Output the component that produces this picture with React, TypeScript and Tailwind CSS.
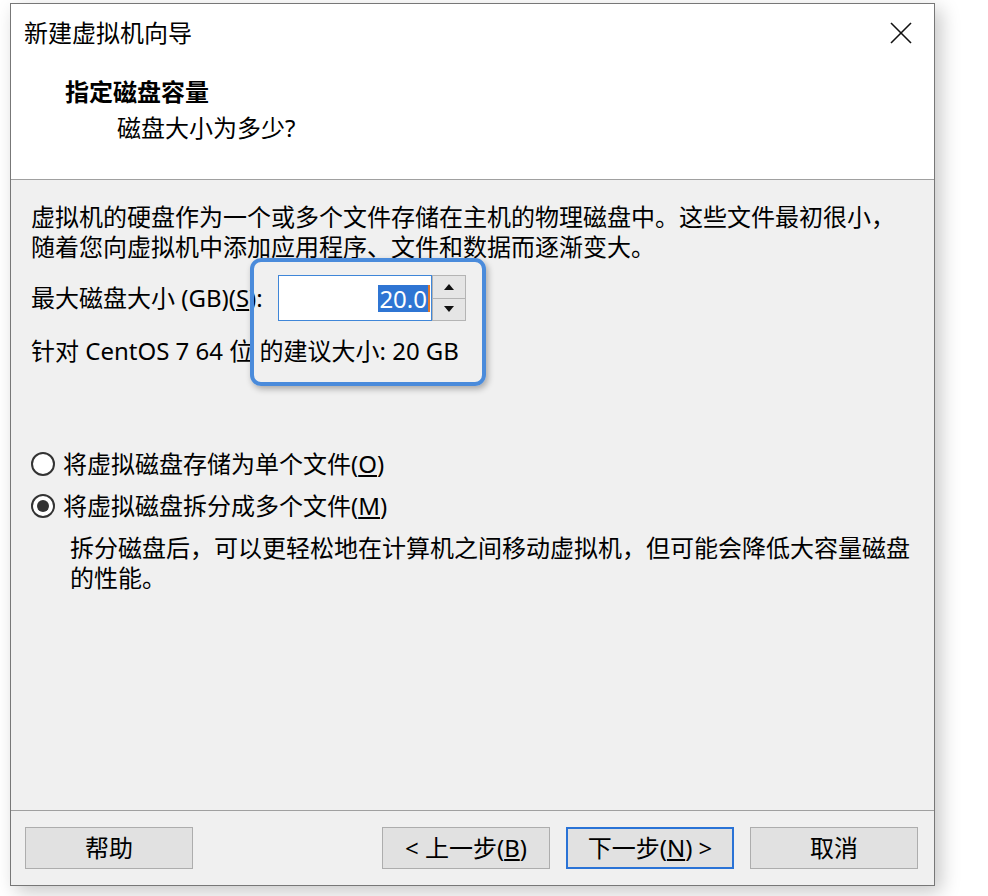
import { type ReactNode } from 'react';

const font = {
  fontFamily: '"Noto Sans", "Noto Sans CJK SC", sans-serif',
};

function Radio({ checked, children }: { checked?: boolean; children: ReactNode }) {
  return (
    <div className="flex items-center h-[30px]">
      <span className="w-[24px] h-[24px] rounded-full border-2 border-[#333333] bg-white flex items-center justify-center">
        {checked && <span className="w-[12px] h-[12px] rounded-full bg-[#333333]" />}
      </span>
      <span className="ml-[8px]">{children}</span>
    </div>
  );
}

function Button({ children, primary }: { children: ReactNode; primary?: boolean }) {
  return (
    <button
      className={
        primary
          ? 'w-[168px] h-[42px] bg-[#e1e1e1] border-2 border-[#2a73d6] flex items-center justify-center'
          : 'w-[168px] h-[42px] bg-[#e1e1e1] border border-[#adadad] flex items-center justify-center'
      }
    >
      {children}
    </button>
  );
}

export default function App() {
  return (
    <div className="min-h-screen bg-white text-[24px] text-black leading-[30px]" style={font}>
      <div className="pt-[3px] pl-[10px]">
        <div className="relative w-[925px] h-[883px] border border-[#777777] flex flex-col bg-[#f0f0f0] shadow-[6px_6px_18px_rgba(0,0,0,0.22)]">
          {/* Header */}
          <div className="h-[176px] bg-white border-b border-[#a0a0a0] shrink-0">
            <div className="flex items-center justify-between pl-[13px] pr-[21px] pt-[13px]">
              <span className="leading-[32px]">新建虚拟机向导</span>
              <svg width="24" height="24" viewBox="0 0 24 24" fill="none" stroke="#111" strokeWidth="1.6">
                <path d="M2 2 L22 22" />
                <path d="M22 2 L2 22" />
              </svg>
            </div>
            <div className="pl-[54px] mt-[27px] font-bold leading-[32px]">指定磁盘容量</div>
            <div className="pl-[106px] mt-[4px] leading-[32px]">磁盘大小为多少?</div>
          </div>

          {/* Body */}
          <div className="flex-1 pl-[20px] pr-[20px] pt-[22px]">
            <p>
              虚拟机的硬盘作为一个或多个文件存储在主机的物理磁盘中。这些文件最初很小，
              <br />
              随着您向虚拟机中添加应用程序、文件和数据而逐渐变大。
            </p>

            <div className="flex items-center mt-[13px] h-[46px]">
              <span className="w-[247px] shrink-0 whitespace-nowrap">
                最大磁盘大小 (GB)(<span className="underline">S</span>):
              </span>
              <div className="flex h-[46px]">
                <div className="w-[154px] h-[46px] bg-white border border-[#3f86d8] flex items-center justify-end pr-[1px]">
                  <span className="bg-[#2f75d3] text-white leading-[27px] px-[1px]">20.0</span>
                  <span className="w-[2px] h-[27px] bg-[#e0772b]" />
                </div>
                <div className="w-[34px] h-[46px] flex flex-col border border-[#b4b4b4] bg-[#f0f0f0]">
                  <div className="flex-1 bg-[#e5e5e5] border-b border-[#b4b4b4] flex items-center justify-center">
                    <svg width="10" height="6" viewBox="0 0 10 6">
                      <path d="M5 0 L10 6 L0 6 Z" fill="#111" />
                    </svg>
                  </div>
                  <div className="flex-1 bg-[#e5e5e5] flex items-center justify-center">
                    <svg width="10" height="6" viewBox="0 0 10 6">
                      <path d="M0 0 L10 0 L5 6 Z" fill="#111" />
                    </svg>
                  </div>
                </div>
              </div>
            </div>

            <p className="mt-[15px]">针对 CentOS 7 64 位 的建议大小: 20 GB</p>

            <div className="mt-[83px] flex flex-col gap-[12px]">
              <Radio>
                将虚拟磁盘存储为单个文件(<span className="underline">O</span>)
              </Radio>
              <Radio checked>
                将虚拟磁盘拆分成多个文件(<span className="underline">M</span>)
              </Radio>
            </div>
            <p className="mt-[12px] pl-[39px] whitespace-nowrap">
              拆分磁盘后，可以更轻松地在计算机之间移动虚拟机，但可能会降低大容量磁盘
              <br />
              的性能。
            </p>
          </div>

          {/* Footer */}
          <div className="border-t border-[#a0a0a0] shrink-0 h-[75px] flex items-center pl-[14px] pr-[16px]">
            <Button>帮助</Button>
            <div className="flex-1" />
            <div className="flex gap-[16px]">
              <Button>
                &lt; 上一步(<span className="underline">B</span>)
              </Button>
              <Button primary>
                下一步(<span className="underline">N</span>) &gt;
              </Button>
              <Button>取消</Button>
            </div>
          </div>

          {/* Highlight callout */}
          <div className="absolute left-[239px] top-[254px] w-[236px] h-[128px] rounded-[11px] border-[4px] border-[#4a8bdb] shadow-[2px_3px_6px_rgba(0,0,0,0.3)] pointer-events-none" />
        </div>
      </div>
    </div>
  );
}
